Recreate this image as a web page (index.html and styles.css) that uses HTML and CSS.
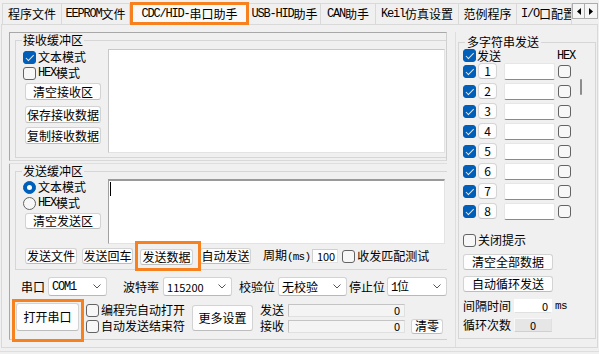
FILE: index.html
```html
<!DOCTYPE html>
<html lang="zh">
<head>
<meta charset="utf-8">
<link rel="stylesheet" href="styles.css">
</head>
<body>
<div class="tabs">
  <div class="tab t1">程序文件</div>
  <div class="tab t2"><span class="m">EEPROM</span>文件</div>
  <div class="tab sel"><span class="m">CDC/HID-</span>串口助手</div>
  <div class="tab t4"><span class="m">USB-HID</span>助手</div>
  <div class="tab t5"><span class="m">CAN</span>助手</div>
  <div class="tab t6"><span class="m">Keil</span>仿真设置</div>
  <div class="tab t7">范例程序</div>
  <div class="tab t8"><span class="m">I/O</span>口配置</div>
  <div class="arrows">
    <span class="arr"><svg width="5" height="7" viewBox="0 0 5 7"><polygon points="5,0 5,7 1,3.5" fill="#000"/></svg></span>
    <span class="arr"><svg width="5" height="7" viewBox="0 0 5 7"><polygon points="0,0 0,7 4,3.5" fill="#000"/></svg></span>
  </div>
</div>

<div class="page">
  <div class="left">
    <div class="pane recv">
      <fieldset class="grp">
        <legend>接收缓冲区</legend>
        <div class="grpbody">
          <div class="ctl">
            <div class="r16 first"><span class="cb on"></span>文本模式</div>
            <div class="r16"><span class="cb"></span><span class="m">HEX</span>模式</div>
            <div class="btn b76 mt2">清空接收区</div>
            <div class="btn b76 mt6">保存接收数据</div>
            <div class="btn b76 mt4">复制接收数据</div>
          </div>
          <div class="edit recv-edit"></div>
        </div>
      </fieldset>
    </div>
    <div class="hsplit"></div>
    <div class="pane send">
      <fieldset class="grp">
        <legend>发送缓冲区</legend>
        <div class="sendbody">
          <div class="grpbody">
            <div class="ctl">
              <div class="r16 first"><span class="rb on"></span>文本模式</div>
              <div class="r16"><span class="rb"></span><span class="m">HEX</span>模式</div>
              <div class="btn b76 b16 mt2">清空发送区</div>
            </div>
            <div class="edit send-edit"><span class="caret"></span></div>
          </div>
          <div class="btnrow">
            <div class="btn w52">发送文件</div>
            <div class="btn w51 ml5">发送回车</div>
            <div class="mark mark-send"><div class="btn w53">发送数据</div></div>
            <div class="btn w51 auto">自动发送</div>
            <span class="period">周期<span class="m">(ms)</span></span>
            <div class="field f100">100</div>
            <span class="cb ml4"></span><span class="lbl2">收发匹配测试</span>
          </div>
        </div>
      </fieldset>
    </div>
    <div class="pane ctrl">
      <div class="crow">
        <span class="lab l1">串口</span>
        <div class="combo c59"><span class="m">COM1</span><svg class="chev" width="8" height="5" viewBox="0 0 8 5"><polyline points="0.5,0.5 4,4 7.5,0.5" fill="none" stroke="#555" stroke-width="1"/></svg></div>
        <span class="lab l2">波特率</span>
        <div class="combo c69"><span class="num">115200</span><svg class="chev" width="8" height="5" viewBox="0 0 8 5"><polyline points="0.5,0.5 4,4 7.5,0.5" fill="none" stroke="#555" stroke-width="1"/></svg></div>
        <span class="lab l3">校验位</span>
        <div class="combo c69b"><span>无校验</span><svg class="chev" width="8" height="5" viewBox="0 0 8 5"><polyline points="0.5,0.5 4,4 7.5,0.5" fill="none" stroke="#555" stroke-width="1"/></svg></div>
        <span class="lab l4">停止位</span>
        <div class="combo c60"><span><span class="m">1</span>位</span><svg class="chev" width="8" height="5" viewBox="0 0 8 5"><polyline points="0.5,0.5 4,4 7.5,0.5" fill="none" stroke="#555" stroke-width="1"/></svg></div>
      </div>
      <div class="brow">
        <div class="mark mark-open"><div class="btn open">打开串口</div></div>
        <div class="chkcol">
          <div class="r16"><span class="cb"></span>编程完自动打开</div>
          <div class="r16 r17"><span class="cb"></span>自动发送结束符</div>
        </div>
        <div class="btn more">更多设置</div>
        <div class="counters">
          <div class="r16"><span class="lab">发送</span><div class="field cnt">0</div></div>
          <div class="r16 r17"><span class="lab">接收</span><div class="field cnt">0</div><div class="btn clr">清零</div></div>
        </div>
      </div>
    </div>
  </div>

  <div class="vsplit"></div>

  <div class="right">
    <fieldset class="grp multi">
      <legend>多字符串发送</legend>
      <div class="multibody">
        <div class="r16 head"><span class="cb on"></span><span class="hsend">发送</span><span class="m hex">HEX</span></div>
        <div class="list">
          <div class="rows">
            <div class="mrow"><span class="cb on"></span><div class="nbtn">1</div><div class="mfield"></div><span class="cb hx"></span></div>
            <div class="mrow"><span class="cb on"></span><div class="nbtn">2</div><div class="mfield"></div><span class="cb hx"></span></div>
            <div class="mrow"><span class="cb on"></span><div class="nbtn">3</div><div class="mfield"></div><span class="cb hx"></span></div>
            <div class="mrow"><span class="cb on"></span><div class="nbtn">4</div><div class="mfield"></div><span class="cb hx"></span></div>
            <div class="mrow"><span class="cb on"></span><div class="nbtn">5</div><div class="mfield"></div><span class="cb hx"></span></div>
            <div class="mrow"><span class="cb on"></span><div class="nbtn">6</div><div class="mfield"></div><span class="cb hx"></span></div>
            <div class="mrow"><span class="cb on"></span><div class="nbtn">7</div><div class="mfield"></div><span class="cb hx"></span></div>
            <div class="mrow"><span class="cb on"></span><div class="nbtn">8</div><div class="mfield"></div><span class="cb hx"></span></div>
          </div>
          <div class="sbar"><div class="thumb"></div></div>
        </div>
        <div class="r14 close"><span class="cb"></span>关闭提示</div>
        <div class="btn w90 mt7">清空全部数据</div>
        <div class="btn w90 mt6">自动循环发送</div>
        <div class="r14 mt7"><span class="lab">间隔时间</span><div class="field intv">0</div><span class="m ms">ms</span></div>
        <div class="r14 mt5"><span class="lab">循环次数</span><div class="field loops">0</div></div>
      </div>
    </fieldset>
  </div>
</div>
<div class="status"></div>
</body>
</html>
```

FILE: styles.css
```css
* { box-sizing: border-box; }
html, body { margin: 0; padding: 0; }
body {
  width: 599px;
  height: 354px;
  overflow: hidden;
  background: #f0f0f0;
  font-family: "Noto Sans CJK SC", sans-serif;
  font-size: 12px;
  line-height: 14px;
  color: #000;
}
.m {
  font-family: "Liberation Mono", "Noto Sans CJK SC", monospace;
  font-size: 12px;
  letter-spacing: -1.2px;
}
.num { font-size: 11px; }

/* tabs */
.tabs {
  display: flex;
  align-items: flex-end;
  height: 24px;
  padding-left: 2px;
}
.tab {
  height: 21px;
  display: flex;
  align-items: center;
  justify-content: center;
  border: 1px solid #d9d9d9;
  border-left: none;
  border-bottom: none;
  background: #f0f0f0;
  white-space: nowrap;
  overflow: hidden;
}
.t1 { width: 60px; border-left: 1px solid #d9d9d9; }
.t2 { width: 68px; }
.sel {
  width: 119px;
  height: 23px;
  margin-bottom: -1px;
  border: 3px solid #f7811e;
  background: #f9f9f9;
  position: relative;
  z-index: 2;
}
.t4 { width: 72px; }
.t5 { width: 55px; }
.t6 { width: 83px; }
.t7 { width: 58px; }
.t8 { width: 55px; justify-content: flex-start; padding-left: 4px; }
.arrows {
  align-self: flex-start;
  margin-top: 3px;
  display: flex;
  height: 16px;
}
.arr {
  width: 13px;
  height: 16px;
  border: 1px solid #adadad;
  background: #f5f5f5;
  display: flex;
  align-items: center;
  justify-content: center;
}
.arr + .arr { border-left: none; }

/* page */
.page {
  display: flex;
  width: 597px;
  height: 324px;
  margin-left: 1px;
  border: 1px solid #d9d9d9;
  padding: 7px 0 0 7px;
}
.left {
  width: 438px;
  display: flex;
  flex-direction: column;
}
.pane {
  border-left: 1px solid #a8a8a8;
  padding-left: 5px;
}
.recv {
  height: 129px;
  border-top: 1px solid #a8a8a8;
  border-right: 1px solid #d0d0d0;
  border-bottom: 1px solid #d8d8d8;
}
fieldset.grp {
  margin: 0;
  padding: 0 0 0 7px;
  border: 1px solid #d6d6d6;
  border-right: none;
  min-width: 0;
}
legend {
  padding: 0 1px;
  margin-left: -1px;
  line-height: 14px;
}
.recv .grp { height: 125px; }
.grpbody { display: flex; }
.ctl {
  width: 85px;
  display: flex;
  flex-direction: column;
  align-items: flex-start;
}
.r16 { height: 16px; display: flex; align-items: center; white-space: nowrap; }
.r17 { height: 16px; }
.r14 { height: 14px; display: flex; align-items: center; white-space: nowrap; }
.first { margin-top: 2px; }
.send .first { margin-top: 1px; }

.cb {
  width: 13px;
  height: 13px;
  flex: none;
  border: 1px solid #636363;
  border-radius: 3px;
  background: #f7f7f7;
  margin-right: 2px;
  position: relative;
}
.cb.on {
  background: #005fb8;
  border-color: #005fb8;
}
.cb.on::after {
  content: "";
  position: absolute;
  left: 3.5px;
  top: 1px;
  width: 3px;
  height: 6.5px;
  border: solid #dfeaf6;
  border-width: 0 1.3px 1.3px 0;
  transform: rotate(45deg);
}
.rb {
  width: 13px;
  height: 13px;
  flex: none;
  border: 1px solid #636363;
  border-radius: 50%;
  background: #f7f7f7;
  margin-right: 2px;
  display: flex;
  align-items: center;
  justify-content: center;
}
.rb.on { background: #005fb8; border-color: #005fb8; }
.rb.on::after {
  content: "";
  width: 5px;
  height: 5px;
  border-radius: 50%;
  background: #fff;
}

.btn {
  background: #fdfdfd;
  border: 1px solid #d3d3d3;
  border-bottom-color: #bdbdbd;
  border-radius: 3px;
  display: flex;
  align-items: center;
  justify-content: center;
  white-space: nowrap;
  flex: none;
}
.b76 { width: 76px; height: 17px; margin-left: 2px; }
.b16 { height: 16px; }
.mt2 { margin-top: 2px; }
.mt4 { margin-top: 4px; }
.mt5 { margin-top: 5px; }
.mt6 { margin-top: 6px; }
.mt7 { margin-top: 7px; }
.ml4 { margin-left: 4px; }
.ml5 { margin-left: 5px; }

.edit {
  background: #fff;
  border: 1px solid;
  border-color: #a0a0a0 #e3e3e3 #e3e3e3 #a0a0a0;
  flex: none;
}
.recv-edit { width: 337px; height: 104px; margin-top: 2px; border-color: #c8c8c8 #e3e3e3 #e3e3e3 #c8c8c8; }
.send-edit { width: 337px; height: 65px; margin-top: 1px; border-top: 2px solid #9a9a9a; padding: 1px 0 0 1px; }
.caret { display: block; width: 1px; height: 14px; background: #000; }

.hsplit {
  height: 3px;
  border-bottom: 1px solid #cde3f5;
}
.send { height: 109px; }
.send .grp { height: 106px; }
.sendbody { display: flex; flex-direction: column; }
.btnrow {
  height: 16px;
  margin-top: 4px;
  display: flex;
  align-items: center;
  white-space: nowrap;
}
.btnrow > .btn { height: 16px; }
.w52 { width: 52px; margin-left: 2px; }
.w51 { width: 51px; }
.w53 { width: 53px; height: 16px; }
.mark {
  border: 3px solid #f7811e;
  flex: none;
  position: relative;
  z-index: 2;
}
.mark-send {
  height: 30px;
  margin-left: 2px;
  padding: 5px 5px 0 2px;
}
.auto { margin-left: -1px; }
.period { margin-left: 12px; }
.period .m { font-size: 11px; letter-spacing: -0.8px; }
.field {
  background: #fff;
  border: 1px solid #cfcfcf;
  flex: none;
  font-size: 11px;
  line-height: 12px;
  display: flex;
  align-items: center;
}
.f100 { width: 26px; height: 14px; margin-left: 2px; justify-content: flex-end; padding-right: 2px; border-color: #cfcfcf #e3e3e3 #e3e3e3 #cfcfcf; }
.lbl2 { margin-left: 0; }

.ctrl {
  height: 67px;
  border-bottom: 1px solid #d0d0d0;
}
.crow {
  margin-top: 4px;
  height: 19px;
  display: flex;
  align-items: center;
  white-space: nowrap;
}
.lab { flex: none; }
.l1 { margin-left: 6px; }
.l2 { margin-left: 16px; }
.l3 { margin-left: 7px; }
.l4 { margin-left: 2px; }
.combo {
  height: 19px;
  background: #fff;
  border: 1px solid #d3d3d3;
  border-bottom-color: #b8b8b8;
  border-radius: 3px;
  display: flex;
  align-items: center;
  justify-content: space-between;
  padding: 0 5px 0 3px;
  flex: none;
}
.c59 { width: 59px; margin-left: 3px; }
.c69 { width: 69px; margin-left: 4px; }
.c69b { width: 69px; margin-left: 3px; }
.c60 { width: 60px; margin-left: 2px; }
.chev { flex: none; }

.brow {
  margin-top: 3px;
  height: 40px;
  display: flex;
  align-items: flex-start;
}
.mark-open {
  margin-left: -3px;
  padding: 1px 2px 8px 1px;
}
.open { width: 63px; height: 28px; }
.chkcol { margin-left: 2px; margin-top: 3px; display: flex; flex-direction: column; }
.more { width: 61px; height: 26px; margin-left: 7px; margin-top: 6px; }
.counters { margin-left: 7px; margin-top: 3px; display: flex; flex-direction: column; }
.cnt {
  width: 117px;
  height: 13px;
  margin-left: 4px;
  background: #f4f4f4;
  border-color: #c4c4c4 #e0e0e0 #e0e0e0 #c4c4c4;
  justify-content: flex-end;
  padding-right: 4px;
}
.clr { width: 32px; height: 15px; margin-left: 6px; }

.vsplit {
  width: 11px;
  flex: none;
  background: linear-gradient(to right, transparent 8px, #cde3f5 8px, #cde3f5 9px, transparent 9px);
}
.right { flex: none; }
fieldset.multi {
  width: 138px;
  height: 304px;
  margin-top: 3px;
  padding: 0 0 0 4px;
  border-right: 1px solid #d6d6d6;
}
.multi legend { margin-left: 2px; padding: 0 2px; }
.multibody { margin-top: -1px; display: flex; flex-direction: column; align-items: flex-start; }
.head { height: 15px; }
.hsend { margin-left: -1px; }
.hex { margin-left: 56px; }
.list { display: flex; }
.rows { width: 113px; display: flex; flex-direction: column; gap: 4px; }
.mrow { height: 16px; display: flex; align-items: center; }
.nbtn {
  width: 19px;
  height: 16px;
  margin-left: 0;
  background: #fdfdfd;
  border: 1px solid #d5d5d5;
  border-bottom-color: #c2c2c2;
  border-radius: 4px;
  display: flex;
  align-items: center;
  justify-content: center;
  font-size: 12px;
  flex: none;
}
.mfield {
  width: 51px;
  height: 17px;
  margin-left: 7px;
  background: #fff;
  border: 1px solid #e6e6e6;
  border-bottom-color: #8a8a8a;
  border-radius: 2px;
  flex: none;
}
.cb.hx { margin-left: 3px; margin-right: 0; }
.sbar { width: 14px; }
.thumb { width: 2px; height: 16px; margin: 16px 0 0 4px; background: #8c8c8c; border-radius: 1px; }
.close { margin-top: 14px; }
.w90 { width: 90px; height: 16px; }
.intv {
  width: 38px;
  height: 14px;
  margin-left: 3px;
  justify-content: flex-end;
  padding-right: 3px;
  border-color: #fff #fff #e0e0e0 #fff;
}
.ms { margin-left: 3px; font-size: 11px; letter-spacing: -0.6px; }
.loops {
  width: 38px;
  height: 14px;
  margin-left: 3px;
  background: #e6e6e6;
  border-color: #f8f8f8 #e0e0e0 #d0d0d0 #f8f8f8;
  justify-content: center;
}
.status {
  margin-top: 3px;
  border-top: 1px solid #cde3f5;
}
```
